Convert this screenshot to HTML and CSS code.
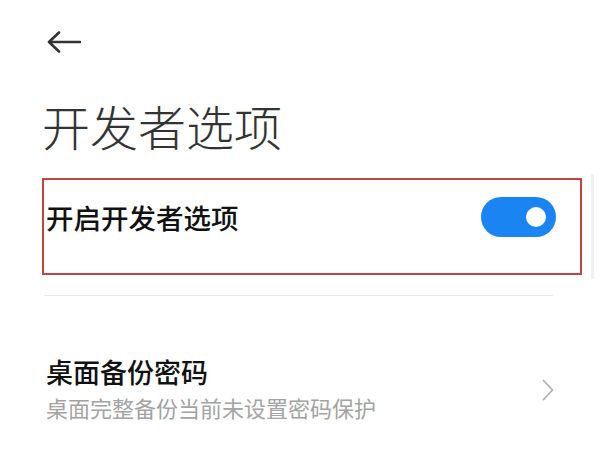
FILE: index.html
```html
<!DOCTYPE html>
<html lang="zh-CN">

<head>
    <meta charset="UTF-8">
    <meta name="viewport" content="width=device-width, initial-scale=1.0">
    <title>开发者选项</title>
    <link rel="stylesheet" href="styles.css">
</head>

<body>
    <div class="settings-page">
        <div class="top-bar">
            <svg class="icon-back" width="34" height="22" viewBox="0 0 34 22">
                <path d="M2 11 H33 M12 1.5 L2 11 L12 20.5" fill="none" stroke="#333" stroke-width="2.6"
                    stroke-linecap="round" stroke-linejoin="round" />
            </svg>
        </div>

        <h1 class="page-title">开发者选项</h1>

        <div class="section-main">
            <div class="highlight-box">
                <div class="switch-row">
                    <span class="row-title">开启开发者选项</span>
                    <span class="toggle on"><span class="knob"></span></span>
                </div>
            </div>
            <div class="edge-shade"></div>
        </div>

        <div class="divider"></div>

        <div class="list-item">
            <div class="item-text">
                <div class="item-title">桌面备份密码</div>
                <div class="item-desc">桌面完整备份当前未设置密码保护</div>
            </div>
            <svg class="icon-chevron" width="12" height="22" viewBox="0 0 12 22">
                <path d="M1.5 1.5 L10.5 11 L1.5 20.5" fill="none" stroke="#b0b0b0" stroke-width="1.8"
                    stroke-linecap="round" stroke-linejoin="round" />
            </svg>
        </div>
    </div>
</body>

</html>
```

FILE: styles.css
```css
:root {
    --text-dark: #111111;
    --text-title: #333333;
    --text-muted: #a3a3a3;
    --accent: #1a84f2;
    --highlight: #bf4541;
    --line: #e9e9e9;
}

* {
    box-sizing: border-box;
    margin: 0;
    padding: 0;
}

body {
    font-family: 'Noto Sans CJK SC', 'Noto Sans', sans-serif;
    background-color: #ffffff;
    color: var(--text-dark);
    width: 600px;
    height: 450px;
    overflow: hidden;
}

.settings-page {
    padding-top: 31px;
}

.top-bar {
    height: 22px;
    padding-left: 47px;
}

.icon-back {
    display: block;
}

.page-title {
    font-size: 48px;
    font-weight: 300;
    color: var(--text-title);
    line-height: 60px;
    margin-top: 42px;
    padding-left: 42px;
}

.section-main {
    position: relative;
    margin-top: 23px;
    padding-left: 42px;
}

.highlight-box {
    width: 540px;
    height: 97px;
    border: 2px solid var(--highlight);
    padding: 17px 24px 0 2px;
}

.switch-row {
    display: flex;
    justify-content: space-between;
    align-items: center;
    height: 40px;
}

.row-title {
    font-size: 27.5px;
    font-weight: 500;
    color: var(--text-dark);
}

.toggle {
    position: relative;
    width: 75px;
    height: 40px;
    border-radius: 20px;
    background-color: #d0d0d0;
}

.toggle.on {
    background-color: var(--accent);
}

.knob {
    position: absolute;
    top: 10px;
    right: 10px;
    width: 20px;
    height: 20px;
    border-radius: 50%;
    background-color: #ffffff;
}

.edge-shade {
    position: absolute;
    top: -4px;
    left: 591px;
    width: 3px;
    height: 105px;
    background-color: #f1f1f1;
}

.divider {
    height: 1px;
    margin: 20px 47px 0 44px;
    background-color: var(--line);
}

.list-item {
    display: flex;
    justify-content: space-between;
    align-items: center;
    margin-top: 56px;
    padding: 0 46px 0 46px;
}

.item-title {
    font-size: 27px;
    font-weight: 500;
    line-height: 39px;
    color: var(--text-dark);
}

.item-desc {
    font-size: 22px;
    line-height: 32px;
    color: var(--text-muted);
}

.icon-chevron {
    display: block;
    margin-top: 4px;
}
```
